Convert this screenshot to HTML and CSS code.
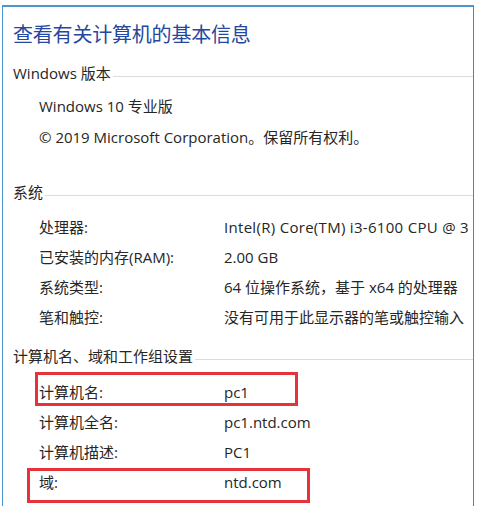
FILE: index.html
```html
<!DOCTYPE html>
<html lang="zh-CN">
<head>
<meta charset="utf-8">
<title>系统</title>
<link rel="stylesheet" href="styles.css">
</head>
<body>
<div class="window">
  <h1 class="title">查看有关计算机的基本信息</h1>

  <div class="group-head g1"><span>Windows 版本</span><i class="rule"></i></div>
  <div class="plain first">Windows 10 专业版</div>
  <div class="plain">© 2019 Microsoft Corporation。保留所有权利。</div>

  <div class="group-head g2"><span>系统</span><i class="rule"></i></div>
  <div class="rows r1">
    <div class="row"><span class="lab">处理器:</span><span class="val cpu">Intel(R) Core(TM) i3-6100 CPU @ 3</span></div>
    <div class="row"><span class="lab">已安装的内存(RAM):</span><span class="val">2.00 GB</span></div>
    <div class="row"><span class="lab">系统类型:</span><span class="val">64 位操作系统，基于 x64 的处理器</span></div>
    <div class="row"><span class="lab">笔和触控:</span><span class="val">没有可用于此显示器的笔或触控输入</span></div>
  </div>

  <div class="group-head g3"><span>计算机名、域和工作组设置</span><i class="rule"></i></div>
  <div class="rows r2">
    <div class="row"><span class="lab">计算机名:</span><span class="val">pc1</span><b class="mark m1"></b></div>
    <div class="row"><span class="lab">计算机全名:</span><span class="val">pc1.ntd.com</span></div>
    <div class="row"><span class="lab">计算机描述:</span><span class="val">PC1</span></div>
    <div class="row"><span class="lab">域:</span><span class="val">ntd.com</span><b class="mark m2"></b></div>
  </div>
</div>
</body>
</html>
```

FILE: styles.css
```css
html, body {
  margin: 0;
  padding: 0;
  background: #ffffff;
  overflow: hidden;
  height: 506px;
}

body {
  font-family: "Open Sans", "Noto Sans CJK SC", sans-serif;
  font-size: 15px;
  color: #262626;
}

.window {
  margin: 5px 0 0 2px;
  width: 472px;
  height: 520px;
  border-top: 2px solid #4a97cf;
  border-left: 1px solid #4a97cf;
  border-right: 1px solid #3b8cc6;
  padding-left: 10px;
  box-sizing: border-box;
  overflow: hidden;
  white-space: nowrap;
}

.title {
  margin: 12px 0 0 0;
  font-family: "Noto Sans CJK SC", sans-serif;
  font-weight: normal;
  font-size: 20px;
  line-height: 30px;
  color: #2647a0;
  letter-spacing: -0.2px;
}

.group-head {
  display: flex;
  align-items: center;
  height: 20px;
  line-height: 20px;
}

.group-head .rule {
  flex: 1;
  height: 1px;
  background: #dcdcdc;
  margin-top: 6px;
  margin-left: 2px;
}

.g1 { margin-top: 14px; }
.g2 { margin-top: 29px; }
.g3 { margin-top: 14px; }

.plain {
  padding-left: 26px;
  height: 31px;
  line-height: 31px;
}

.plain.first { margin-top: 8px; }

.rows.r1 { margin-top: 10px; }
.rows.r2 { margin-top: 11px; }

.row {
  position: relative;
  display: grid;
  grid-template-columns: 185px auto;
  padding-left: 26px;
  height: 30px;
  line-height: 30px;
}

.val.cpu {
  letter-spacing: 0.3px;
}

.mark {
  position: absolute;
  border: 3px solid #e5323b;
  box-sizing: border-box;
}

.m1 {
  left: 22px;
  top: -5px;
  width: 263px;
  height: 34px;
}

.m2 {
  left: 14px;
  top: 1px;
  width: 283px;
  height: 35px;
}
```
